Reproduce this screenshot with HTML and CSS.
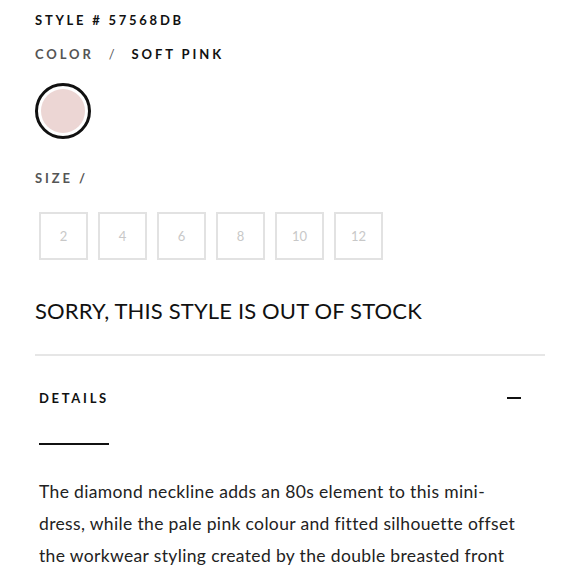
FILE: index.html
```html
<!DOCTYPE html>
<html>
<head>
<meta charset="utf-8">
<link rel="stylesheet" href="styles.css">
</head>
<body>
<div class="product">
  <div class="style-num">STYLE # 57568DB</div>
  <div class="color-row"><span class="label">COLOR</span><span class="slash">/</span><span class="value">SOFT PINK</span></div>
  <div class="swatch"><div class="swatch-fill"></div></div>
  <div class="size-label">SIZE /</div>
  <div class="sizes">
    <div class="size">2</div>
    <div class="size">4</div>
    <div class="size">6</div>
    <div class="size">8</div>
    <div class="size">10</div>
    <div class="size">12</div>
  </div>
  <h2 class="oos">SORRY, THIS STYLE IS OUT OF STOCK</h2>
  <div class="divider"></div>
  <div class="details">
    <div class="details-head"><span class="details-title">DETAILS</span><span class="minus"></span></div>
    <div class="details-rule"></div>
    <p class="desc">The diamond neckline adds an 80s element to this mini-<br>dress, while the pale pink colour and fitted silhouette offset<br>the workwear styling created by the double breasted front<br>and features a sleeveless cut and button fastenings.</p>
  </div>
</div>
</body>
</html>
```
FILE: styles.css
```css
html, body { margin: 0; padding: 0; background: #fff; }
body { font-family: "Lato", "Liberation Sans", sans-serif; color: #111; overflow: hidden; height: 580px; }
.product { padding: 10px 35px 0 35px; }
.style-num { font-size: 13px; font-weight: 700; letter-spacing: 2.75px; line-height: 20px; }
.color-row { margin-top: 14px; font-size: 13px; font-weight: 700; letter-spacing: 2.9px; line-height: 20px; display: flex; }
.color-row .label { color: #555; }
.color-row .slash { color: #555; margin-left: 15px; font-weight: 400; }
.color-row .value { margin-left: 14px; color: #111; }
.swatch { margin-top: 19px; width: 56px; height: 56px; border-radius: 50%; border: 3px solid #111; box-sizing: border-box; padding: 3px; }
.swatch-fill { width: 100%; height: 100%; border-radius: 50%; background: #ecd6d4; }
.size-label { margin-top: 29px; font-size: 13px; font-weight: 700; letter-spacing: 2.9px; line-height: 20px; color: #555; }
.sizes { display: flex; gap: 10px; margin-top: 24px; padding-left: 4px; }
.size { width: 49px; height: 48px; box-sizing: border-box; border: 2px solid #e2e2e2; display: flex; align-items: center; justify-content: center; font-size: 13px; color: #c8c8c8; }
.oos { margin: 38px 0 0 0; font-size: 22px; font-weight: 400; line-height: 26px; color: #111; letter-spacing: 0.15px; }
.divider { margin-top: 30px; height: 2px; background: #e6e6e6; }
.details { padding: 0 24px 0 4px; }
.details-head { display: flex; justify-content: space-between; align-items: center; margin-top: 32px; height: 20px; }
.details-title { font-size: 13px; font-weight: 700; letter-spacing: 2.7px; }
.minus { width: 14px; height: 2px; background: #111; }
.details-rule { margin-top: 35px; width: 70px; height: 2px; background: #111; }
.desc { margin: 31px 0 0 0; font-size: 17.5px; line-height: 32px; color: #222; letter-spacing: 0.35px; }
```
